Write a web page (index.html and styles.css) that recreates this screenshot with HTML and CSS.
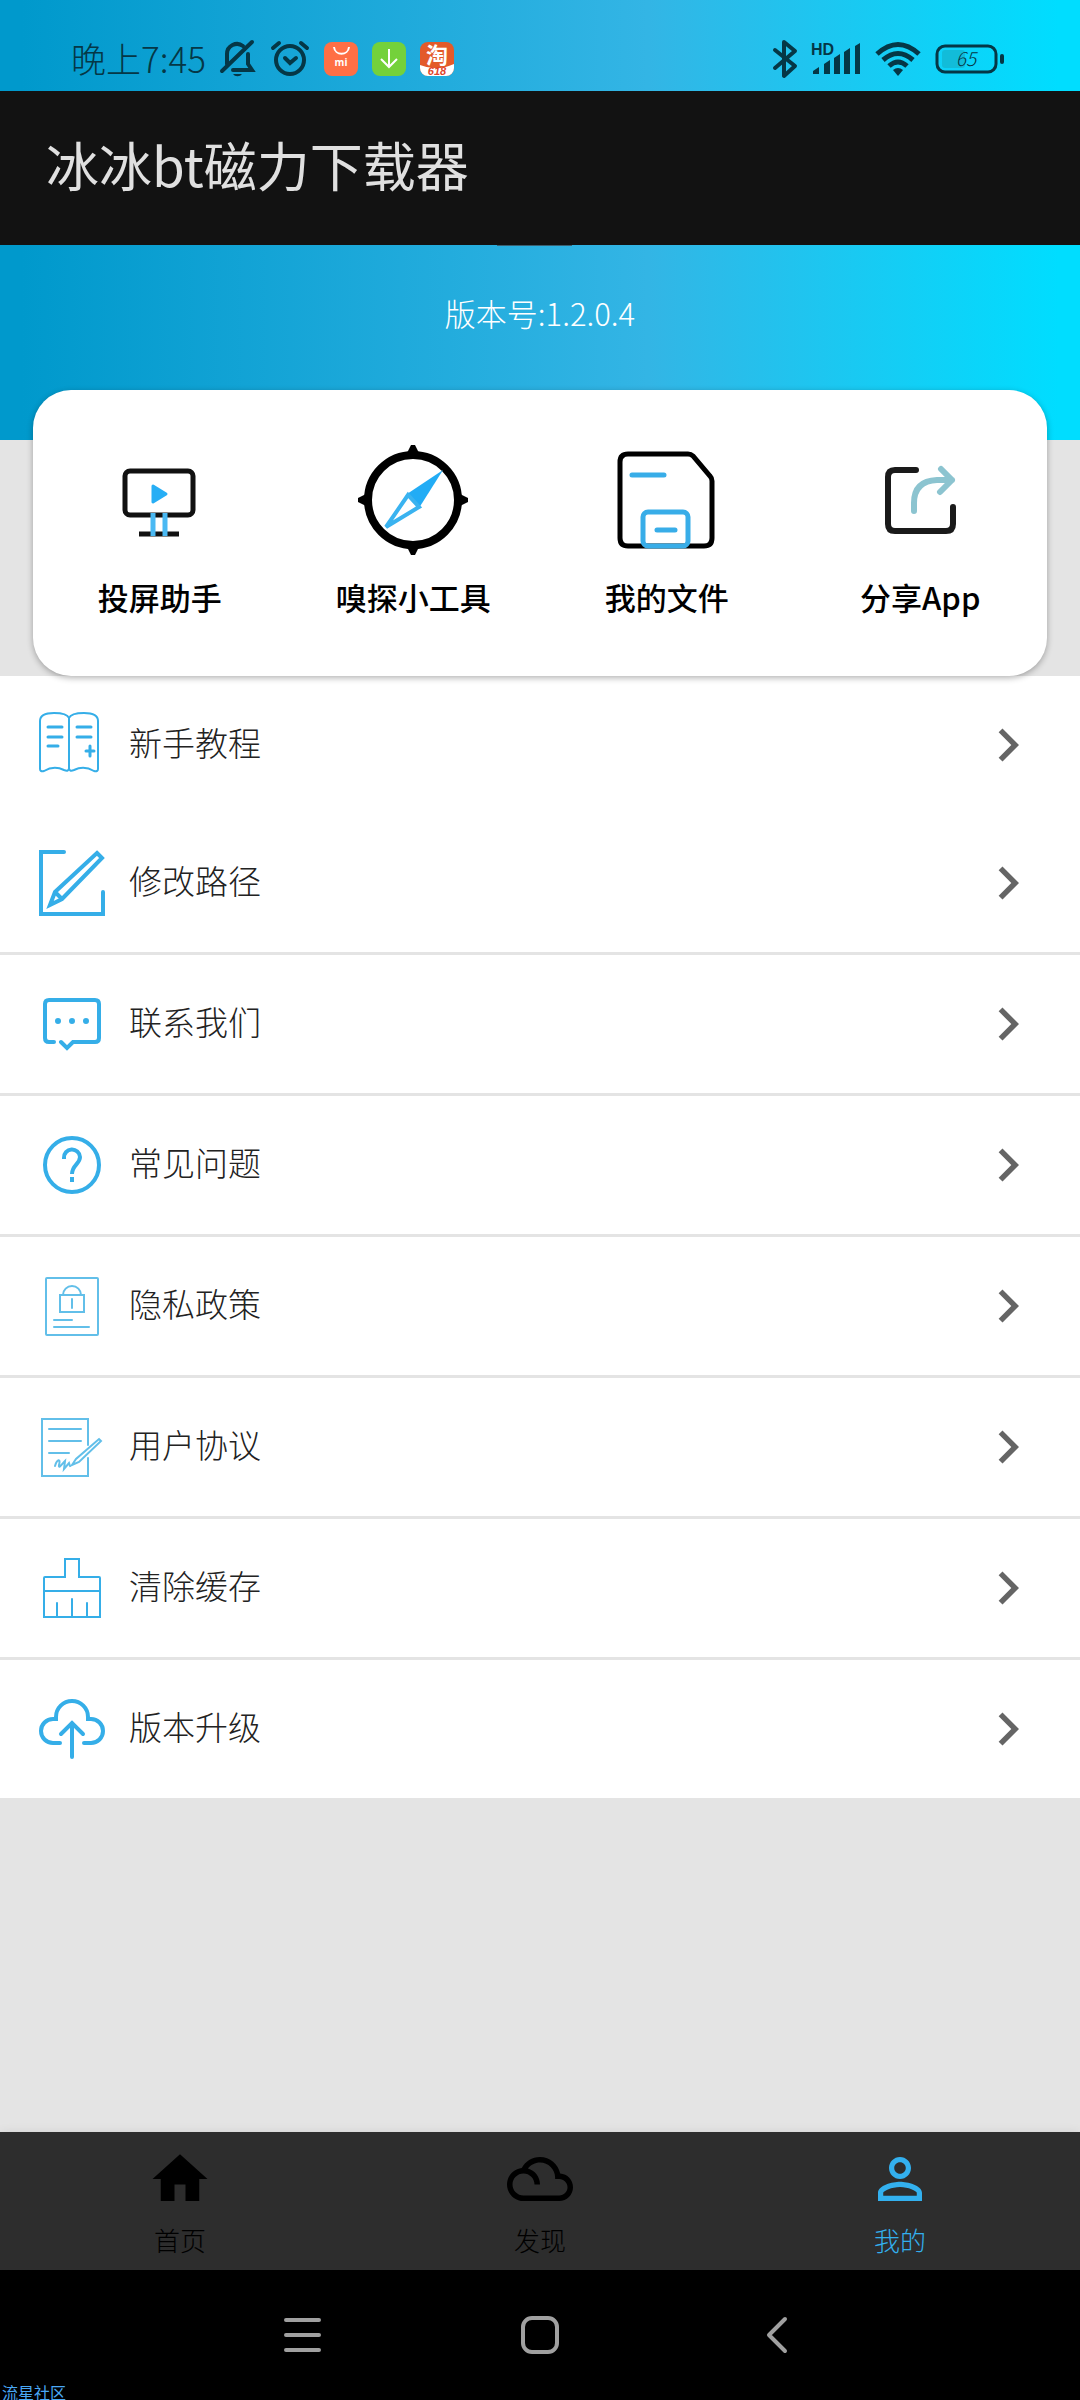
FILE: index.html
```
<!DOCTYPE html>
<html lang="zh-CN">
<head>
    <meta charset="UTF-8">
    <meta name="viewport" content="width=device-width, initial-scale=1.0">
    <title>冰冰bt磁力下载器</title>
    <link rel="stylesheet" href="styles.css">
</head>
<body>
    <div class="status-bar">
        <div class="status-left">
            <span class="clock">晚上7:45</span>
            <svg width="36" height="38" viewBox="0 0 36 38" fill="none" stroke="#053746" stroke-width="4" stroke-linecap="round">
                <path d="M7 24V14a10 10 0 0 1 16-8M28 14v10l4 6H13"/>
                <path d="M2 31L32 2"/>
                <path d="M13 34h9a5 4 0 0 1-9 0z" fill="#053746" stroke="none"/>
            </svg>
            <svg width="40" height="38" viewBox="0 0 40 38" fill="none" stroke="#053746" stroke-width="4" stroke-linecap="round">
                <circle cx="20" cy="20" r="14"/>
                <path d="M3 8l6-5M37 8l-6-5M15 18l5 5 6-5"/>
            </svg>
            <svg width="34" height="34" viewBox="0 0 34 34">
                <rect width="34" height="34" rx="8" fill="#ff6f45"/>
                <path d="M10 5c1 9 14 9 15 0" fill="none" stroke="#fff" stroke-width="2"/>
                <text class="mi-text" x="17" y="24" text-anchor="middle">mi</text>
            </svg>
            <svg width="34" height="34" viewBox="0 0 34 34">
                <rect width="34" height="34" rx="8" fill="#74d13b"/>
                <path d="M17 7v18M9 17l8 8 8-8" fill="none" stroke="#fff" stroke-width="2"/>
            </svg>
            <svg width="34" height="34" viewBox="0 0 34 34">
                <rect width="34" height="34" rx="8" fill="#e35a2a"/>
                <path d="M0 23q17 7 34-1v4a8 8 0 0 1-8 8H8a8 8 0 0 1-8-8z" fill="#fff"/>
                <text class="tao-text" x="17" y="21" text-anchor="middle">淘</text>
                <text class="sale-text" x="17" y="33" text-anchor="middle">618</text>
            </svg>
        </div>
        <div class="status-right">
            <svg width="24" height="38" viewBox="0 0 24 38" fill="none" stroke="#053746" stroke-width="4" stroke-linecap="round" stroke-linejoin="round">
                <path d="M2 10l20 16-11 10V2l11 9L2 28"/>
            </svg>
            <svg width="50" height="34" viewBox="0 0 50 34" fill="#053746">
                <text class="hd-text" x="0" y="13">HD</text>
                <path d="M2 32v-3l6-4v7zM13 32V22l6-4v14zM23 32V16l6-4v20zM33 32V10l6-4v26zM44 32V4l5-3v31z"/>
            </svg>
            <svg width="46" height="34" viewBox="0 0 46 34" fill="none" stroke="#053746" stroke-width="5">
                <path d="M2 12q21-19 42 0M8 18q15-13 30 0M14 24q9-8 18 0"/>
                <path d="M18 28q5-4 10 0l-5 6z" fill="#053746" stroke="none"/>
            </svg>
            <svg width="69" height="30" viewBox="0 0 69 30">
                <rect x="7" y="6" width="23" height="18" rx="3" fill="#12bcd9"/>
                <rect x="2" y="2" width="59" height="26" rx="8" fill="none" stroke="#053746" stroke-width="3"/>
                <rect x="65" y="10" width="4" height="10" rx="2" fill="#053746"/>
                <text class="battery-text" x="31" y="22" text-anchor="middle">65</text>
            </svg>
        </div>
    </div>

    <header class="app-bar">
        <h1>冰冰bt磁力下载器</h1>
    </header>

    <main>
        <div class="banner">版本号:1.2.0.4</div>

        <div class="card">
            <button type="button" class="tool">
                <svg width="110" height="110" viewBox="0 0 110 110" fill="none" stroke="#111" stroke-width="5">
                    <rect x="20" y="26" width="68" height="44" rx="5"/>
                    <path d="M34 89h40"/>
                    <path d="M48 68v23M60 68v23" stroke="#4ab9f3"/>
                    <path d="M48 41l13 8-13 8z" fill="#27aef5" stroke="#27aef5" stroke-width="3" stroke-linejoin="round"/>
                </svg>
                <span>投屏助手</span>
            </button>
            <button type="button" class="tool">
                <svg width="110" height="110" viewBox="0 0 110 110">
                    <circle cx="55" cy="55" r="45" fill="none" stroke="#000" stroke-width="8"/>
                    <path d="M49 8l4-8h4l4 8zM49 102l4 8h4l4-8zM8 49l-8 4v4l8 4zM102 49l8 4v4l-8 4z"/>
                    <path d="M85 25L49 49l12 14z" fill="#22acf5"/>
                    <path d="M50 50L28 82l33-20z" fill="none" stroke="#3ab3f0" stroke-width="4"/>
                </svg>
                <span>嗅探小工具</span>
            </button>
            <button type="button" class="tool">
                <svg width="110" height="110" viewBox="0 0 110 110" fill="none" stroke="#000" stroke-width="5" stroke-linecap="round">
                    <path d="M16 9h60q3 0 5 2l17 20q2 2 2 5v57q0 8-8 8H16q-8 0-8-8V17q0-8 8-8z"/>
                    <g stroke="#38ade8">
                        <path d="M20 30h32M45 85h18"/>
                        <rect x="31" y="67" width="45" height="34" rx="5"/>
                    </g>
                </svg>
                <span>我的文件</span>
            </button>
            <button type="button" class="tool">
                <svg width="110" height="110" viewBox="0 0 110 110" fill="none" stroke="#1a1a1a" stroke-width="6" stroke-linecap="round" stroke-linejoin="round">
                    <path d="M51 25H30q-7 0-7 7v47q0 7 7 7h51q7 0 7-7V62"/>
                    <path d="M49 66V58Q49 36 72 35h15M76 24l11 11-12 12" stroke="#8cc4d0"/>
                </svg>
                <span>分享App</span>
            </button>
        </div>

        <ul class="menu">
            <li><a href="#">
                <svg class="menu-icon" viewBox="0 0 66 66" stroke-width="3">
                    <path d="M30 6Q28 1 15 1 1 1 1 9V57q0 3 4 2Q15 53 25 58q5 2 5-2zM30 6Q32 1 45 1 59 1 59 9V57q0 3-4 2Q45 53 35 58q-5 2-5-2z" stroke-width="2"/>
                    <path d="M9 15h14M9 25h14M9 34h10M38 15h14M38 25h14M51 34v10M47 39h8"/>
                </svg>
                <span>新手教程</span>
                <svg class="chevron" viewBox="0 0 24 24"><path d="M8.6 16.6L13.2 12 8.6 7.400 10 6l6 6-6 6z"/></svg>
            </a></li>
            <li><a href="#">
                <svg class="menu-icon" viewBox="0 0 66 66" stroke-width="4">
                    <path d="M25 2H2V64H64V42"/>
                    <path d="M58 3l5 5L23 49l-12 6 5-13zM16 42l7 7"/>
                </svg>
                <span>修改路径</span>
                <svg class="chevron" viewBox="0 0 24 24"><path d="M8.6 16.6L13.2 12 8.6 7.400 10 6l6 6-6 6z"/></svg>
            </a></li>
            <li><a href="#">
                <svg class="menu-icon" viewBox="0 0 66 66" stroke-width="4">
                    <path d="M15 51H10q-4 0-4-4V13q0-4 4-4H56q4 0 4 4V47q0 4-4 4H34l-6 6-6-6"/>
                    <path d="M19 30h0M33 30h0M47 30h0" stroke-width="6"/>
                </svg>
                <span>联系我们</span>
                <svg class="chevron" viewBox="0 0 24 24"><path d="M8.6 16.6L13.2 12 8.6 7.400 10 6l6 6-6 6z"/></svg>
            </a></li>
            <li><a href="#">
                <svg class="menu-icon" viewBox="0 0 66 66" stroke-width="4">
                    <circle cx="33" cy="33" r="27"/>
                    <path class="square" d="M25 27v-1a8 8 0 0 1 16-1c0 7-8 8-8 17M33 45v5"/>
                </svg>
                <span>常见问题</span>
                <svg class="chevron" viewBox="0 0 24 24"><path d="M8.6 16.6L13.2 12 8.6 7.400 10 6l6 6-6 6z"/></svg>
            </a></li>
            <li><a href="#">
                <svg class="menu-icon light" viewBox="0 0 66 66" stroke-width="2">
                    <rect x="7" y="5" width="52" height="57" rx="1"/>
                    <rect x="21" y="22" width="24" height="17"/>
                    <path d="M24 22a9 9 0 0 1 18 0M33 26v9M15 47h18M15 54h35"/>
                </svg>
                <span>隐私政策</span>
                <svg class="chevron" viewBox="0 0 24 24"><path d="M8.6 16.6L13.2 12 8.6 7.400 10 6l6 6-6 6z"/></svg>
            </a></li>
            <li><a href="#">
                <svg class="menu-icon light" viewBox="0 0 66 66" stroke-width="2">
                    <path d="M49 31V5H3V62H49V44M10 15h32M10 27h32M10 39h20"/>
                    <path d="M16 52c2-7 6-8 4-1-1 5 4-2 6-4l-1 8 5-6 1 3"/>
                    <path d="M33 51l4-6 23-20 2 2-22 21z"/>
                </svg>
                <span>用户协议</span>
                <svg class="chevron" viewBox="0 0 24 24"><path d="M8.6 16.6L13.2 12 8.6 7.400 10 6l6 6-6 6z"/></svg>
            </a></li>
            <li><a href="#">
                <svg class="menu-icon" viewBox="0 0 66 66" stroke-width="2">
                    <path d="M26 22V4H40V22H60q1 0 1 1V62H5V23q0-1 1-1zM5 36H61M18 48v14M33 44v18M48 48v14"/>
                </svg>
                <span>清除缓存</span>
                <svg class="chevron" viewBox="0 0 24 24"><path d="M8.6 16.6L13.2 12 8.6 7.400 10 6l6 6-6 6z"/></svg>
            </a></li>
            <li><a href="#">
                <svg class="menu-icon" viewBox="0 0 66 66" stroke-width="4">
                    <path d="M21 47H14a12 12 0 0 1 0-24H17v-2a16 16 0 0 1 32 0v2h3a12 12 0 0 1 0 24H45M33 61V27M22 38l11-11 11 11"/>
                </svg>
                <span>版本升级</span>
                <svg class="chevron" viewBox="0 0 24 24"><path d="M8.6 16.6L13.2 12 8.6 7.400 10 6l6 6-6 6z"/></svg>
            </a></li>
        </ul>
    </main>

    <nav class="tab-bar">
        <a href="#">
            <svg viewBox="0 0 24 24"><path d="M10 20v-6h4v6h5v-8h3L12 3 2 12h3v8z"/></svg>
            <span>首页</span>
        </a>
        <a href="#">
            <svg viewBox="0 0 24 24"><path d="M19.35 10.04C18.67 6.59 15.64 4 12 4 9.11 4 6.61 5.64 5.36 8.04 2.35 8.36 0 10.9 0 14c0 3.31 2.69 6 6 6h13c2.76 0 5-2.24 5-5 0-2.64-2.05-4.78-4.65-4.96zM19 18H6c-2.21 0-4-1.79-4-4s1.79-4 4-4 4 1.79 4 4h2c0-2.76-1.86-5.08-4.400-5.780C8.61 6.88 10.2 6 12 6c3.03 0 5.5 2.47 5.5 5.5v.5H19c1.65 0 3 1.35 3 3s-1.35 3-3 3z"/></svg>
            <span>发现</span>
        </a>
        <a href="#" class="active">
            <svg viewBox="0 0 24 24"><path d="M12 5.900c1.160 0 2.100.940 2.100 2.100s-.940 2.100-2.100 2.100S9.900 9.160 9.900 8s.940-2.100 2.100-2.100m0 9c2.970 0 6.100 1.460 6.100 2.100v1.100H5.900V17c0-.640 3.130-2.100 6.100-2.100M12 4C9.790 4 8 5.790 8 8s1.790 4 4 4 4-1.790 4-4-1.790-4-4-4zm0 9c-2.670 0-8 1.340-8 4v3h16v-3c0-2.660-5.330-4-8-4z"/></svg>
            <span>我的</span>
        </a>
    </nav>

    <div class="system-nav">
        <button type="button" aria-label="菜单">
            <svg width="38" height="38" viewBox="0 0 38 38"><path d="M2 4h33M2 19h33M2 34h33"/></svg>
        </button>
        <button type="button" aria-label="主页">
            <svg width="38" height="38" viewBox="0 0 38 38"><rect x="2" y="2" width="34" height="34" rx="9"/></svg>
        </button>
        <button type="button" aria-label="返回">
            <svg width="38" height="38" viewBox="0 0 38 38"><path d="M27 3L11 19l16 16"/></svg>
        </button>
        <span class="watermark">流星社区</span>
    </div>
</body>
</html>
```

FILE: styles.css
```
* { box-sizing: border-box; }
body { font-family: "Noto Sans CJK SC", sans-serif; font-weight: 300; margin: 0; min-height: 100vh; display: flex; flex-direction: column; background-color: #e4e4e4; color: #222; }
svg { display: block; flex: none; overflow: visible; }
a { color: inherit; text-decoration: none; }
button { font: inherit; color: inherit; background: none; border: none; padding: 0; cursor: pointer; }

.status-bar, .banner { background: linear-gradient(to right, #0099cc 2%, #33b5e5 60%, #00ddff 98%); }
.status-bar { height: 91px; padding: 27px 76px 0 71px; display: flex; justify-content: space-between; align-items: flex-start; color: #053746; }
.status-left, .status-right { display: flex; align-items: center; height: 64px; }
.status-left { gap: 14px; }
.status-right { gap: 14px; }
.clock { font-size: 35px; line-height: 40px; padding-bottom: 2px; }
.mi-text { font: bold 10px "Open Sans", sans-serif; fill: #fff; }
.tao-text { font-size: 22px; font-weight: 700; fill: #fff; }
.sale-text { font: italic bold 11px "Liberation Sans", sans-serif; fill: #e0452c; }
.hd-text { font: bold 16px "Liberation Sans", sans-serif; }
.battery-text { font-size: 19px; font-style: italic; fill: #053746; }

.app-bar { position: relative; height: 154px; padding: 0 46px 8px; display: flex; align-items: center; background-color: #121212; color: #e0e0e0; }
.app-bar::after { content: ""; position: absolute; left: 46%; top: 100%; width: 7%; height: 1px; background-color: #3a5f70; }
h1 { margin: 0; font-size: 53px; line-height: 80px; font-weight: 400; }

main { flex: 1; }
.banner { height: 195px; padding-top: 48px; font-size: 31px; line-height: 40px; text-align: center; color: #fff; }
.card { position: relative; margin: -50px 33px 0; padding: 55px 0 59px; display: grid; grid-template-columns: repeat(4, 1fr); background-color: #fff; border-radius: 38px; box-shadow: 0 2px 6px rgba(0, 0, 0, 0.3); }
.tool { display: flex; flex-direction: column; align-items: center; gap: 22px; font-size: 31px; line-height: 40px; font-weight: 500; color: #000; }

.menu { list-style: none; margin: 0; padding: 0; background-color: #fff; }
.menu li { border-top: 3px solid #e4e4e4; }
.menu li:nth-child(-n+2) { border-top: none; }
.menu a { display: flex; align-items: center; height: 138px; padding: 0 39px; gap: 24px; font-size: 33px; line-height: 48px; }
.menu span { flex: 1; padding-bottom: 6px; }
.menu-icon { width: 66px; height: 66px; fill: none; stroke: #35aee8; stroke-linecap: round; }
.menu-icon.light { stroke: #62bfe9; }
.menu-icon .square { stroke-linecap: butt; }
.chevron { width: 66px; height: 66px; fill: #656565; }

.tab-bar { display: flex; height: 138px; padding: 14px 0 0; background-color: #2d2d2d; color: #000; box-shadow: 0 0 10px rgba(0, 0, 0, 0.08); }
.tab-bar a { flex: 1; display: flex; flex-direction: column; align-items: center; gap: 10px; font-size: 26px; line-height: 36px; }
.tab-bar svg { width: 66px; height: 66px; fill: currentColor; }
.tab-bar .active { color: #33b0ee; }

.system-nav { position: relative; height: 130px; display: flex; justify-content: center; align-items: center; gap: 199px; background-color: #000; }
.system-nav svg { fill: none; stroke: #a0a0a0; stroke-width: 4; stroke-linecap: round; stroke-linejoin: round; }
.watermark { position: absolute; left: 2px; bottom: 0; font-size: 16px; line-height: 16px; font-weight: 400; color: #4aa8f5; }
```
